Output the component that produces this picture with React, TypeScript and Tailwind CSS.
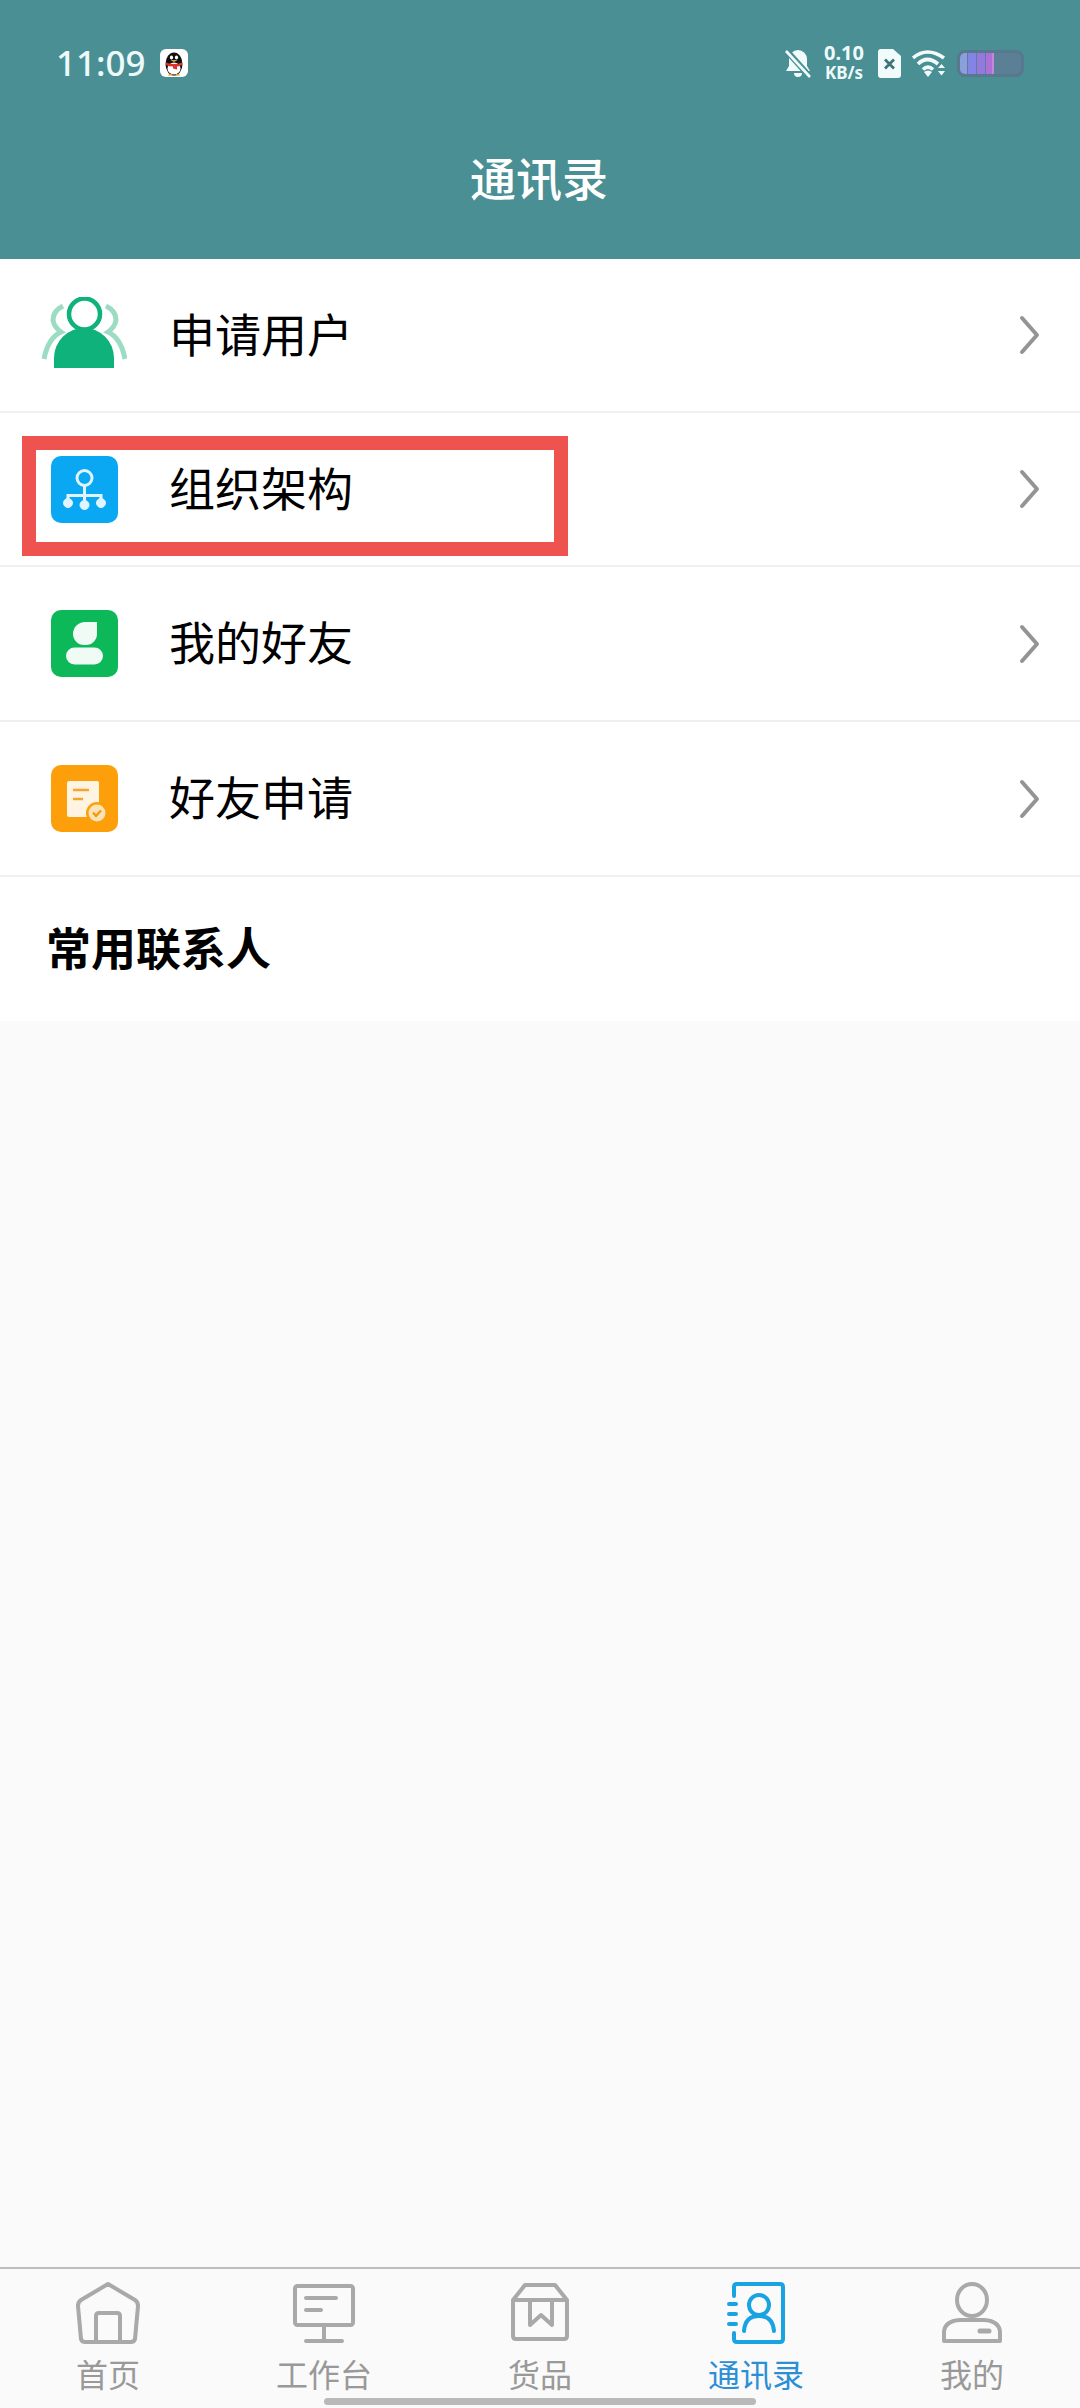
import type { ReactNode } from 'react';

const font = { fontFamily: '"Noto Sans CJK SC", "Noto Sans", sans-serif' };

function PenguinBadge() {
  return (
    <div className="w-7 h-7 rounded-md bg-white flex items-center justify-center">
      <svg viewBox="0 0 28 28" className="w-7 h-7">
        <ellipse cx="14" cy="15" rx="8.5" ry="11.5" fill="#111" />
        <ellipse cx="14" cy="19.5" rx="6.5" ry="6" fill="#fff" />
        <ellipse cx="11.5" cy="8.5" rx="1.6" ry="2" fill="#fff" />
        <ellipse cx="16.5" cy="8.5" rx="1.6" ry="2" fill="#fff" />
        <path d="M10.5 11 h7 l-3.5 2 z" fill="#f0a020" />
        <path d="M6 13.5 q8 3 16 0 l0 2.5 q-3 1.5 -5 1.5 l0 3 l-4 -1 l0 -2 q-4 0 -7 -1.5 z" fill="#d8342c" />
        <path d="M8 26.5 h5 l-1 -1.5 h-3 z M15 26.5 h5 l-1 -1.5 h-3 z" fill="#e8a020" />
      </svg>
    </div>
  );
}

function StatusIcons() {
  return (
    <div className="flex items-center">
      <svg viewBox="0 0 26 29" className="w-[26px] h-[29px]">
        <path d="M13 1 a9 9 0 0 1 9 9 v7 l3 5 H1 l3 -5 V10 a9 9 0 0 1 9 -9 z M9 24 h8 a4 4 0 0 1 -8 0 z" fill="#f2fbfb" />
        <path d="M1 1 L25 28" stroke="#498f94" strokeWidth="6" />
        <path d="M1 2 L25 28" stroke="#f2fbfb" strokeWidth="2.6" />
      </svg>
      <div className="ml-[12px] w-[42px] flex flex-col items-center font-bold text-[#eefafa]" style={{ fontFamily: '"Noto Sans", sans-serif' }}>
        <span className="text-[20px] h-[20px] leading-[20px]">0.10</span>
        <span className="text-[17px] h-[20px] leading-[20px] whitespace-nowrap">KB/s</span>
      </div>
      <svg viewBox="0 0 23 29" className="ml-[13px] w-[23px] h-[29px]">
        <path d="M3 0 H15 L23 7 V26 a3 3 0 0 1 -3 3 H3 a3 3 0 0 1 -3 -3 V3 a3 3 0 0 1 3 -3 z" fill="#f2fbfb" />
        <path d="M7 10.5 L16 19.5 M16 10.5 L7 19.5" stroke="#3d7478" strokeWidth="2.8" />
      </svg>
      <svg viewBox="0 0 34 28" className="ml-[11px] w-[34px] h-[28px]" fill="none" stroke="#f2fbfb" strokeWidth="3.6">
        <path d="M1 9 Q15 -3 32 9" />
        <path d="M6 15 Q15 6 26 15" />
        <path d="M11 20.5 Q16 15.5 21 20.5" />
        <path d="M12 23 L16 28 L20 23 Q16 20 12 23 z" fill="#f2fbfb" stroke="none" />
        <path d="M26 19 L29.5 15 L33 19 z M26 22 L29.5 26.5 L33 22 z" fill="#f2fbfb" stroke="none" />
      </svg>
      <div className="ml-[11px] w-[67px] h-[27px] rounded-[8px] border-[3px] border-[#58788f] bg-[#5b7f95] overflow-hidden flex">
        <div className="w-[7px] bg-[#8b9fdc]" />
        <div className="w-[8px] ml-[1px] bg-[#8484e6]" />
        <div className="w-[8px] ml-[1px] bg-[#9478e0]" />
        <div className="w-[6px] ml-[1px] bg-[#ae6fd6]" />
        <div className="w-[2px] bg-[#c08ad8]" />
      </div>
    </div>
  );
}

function ApplyUserIcon() {
  return (
    <svg viewBox="0 0 86 76" className="w-[86px] h-[76px]">
      <path d="M22 9 Q12 14 12 23 Q13 30 20 35 Q7 41 3 62" fill="none" stroke="#9bdcc3" strokeWidth="5" />
      <path d="M65 9 Q75 14 75 23 Q74 30 67 35 Q80 41 84 62" fill="none" stroke="#9bdcc3" strokeWidth="5" />
      <path d="M13 71 V61 a30 30 0 0 1 60 0 V71 z" fill="#0fb27a" />
      <circle cx="43.5" cy="17" r="15.5" fill="#fff" stroke="#0fb27a" strokeWidth="4.5" />
    </svg>
  );
}

function OrgIcon() {
  return (
    <div className="w-[67px] h-[67px] rounded-[10px] bg-[#0aa7f2] flex items-center justify-center">
      <svg viewBox="0 0 67 67" className="w-[67px] h-[67px]" fill="#dff4ff" stroke="#dff4ff">
        <circle cx="33.5" cy="22" r="7.5" fill="none" strokeWidth="3" />
        <path d="M33.5 29.5 V47 M17 47 V39.5 H50 V47" fill="none" strokeWidth="3" />
        <circle cx="17" cy="47" r="4.5" />
        <circle cx="33.5" cy="49" r="4.5" />
        <circle cx="50" cy="47" r="4.5" />
      </svg>
    </div>
  );
}

function FriendIcon() {
  return (
    <div className="w-[67px] h-[67px] rounded-[10px] bg-[#0cb858] flex items-center justify-center">
      <svg viewBox="0 0 67 67" className="w-[67px] h-[67px]" fill="#f1fbf5">
        <path d="M46 12 V24 a11 11 0 0 1 -11 11 H33 a11 11 0 0 1 -11 -11 V24 a12 12 0 0 1 12 -12 z" />
        <rect x="15" y="37.5" width="37" height="17" rx="8.5" />
      </svg>
    </div>
  );
}

function RequestIcon() {
  return (
    <div className="w-[67px] h-[67px] rounded-[10px] bg-[#fd9f0a] flex items-center justify-center">
      <svg viewBox="0 0 67 67" className="w-[67px] h-[67px]">
        <rect x="16" y="16" width="32" height="36" rx="2" fill="#fff4e2" />
        <path d="M22 25 H38 M22 34 H32" stroke="#f5a52d" strokeWidth="2.4" />
        <circle cx="46" cy="48" r="11" fill="#fd9f0a" />
        <circle cx="46" cy="48" r="8.5" fill="#fbe3b8" />
        <path d="M42 47.5 L45 51 L50 45.5" fill="none" stroke="#f39a10" strokeWidth="2.4" />
      </svg>
    </div>
  );
}

const rows = [
  { label: '申请用户', icon: <ApplyUserIcon />, h: 'h-[154px]' },
  { label: '组织架构', icon: <OrgIcon />, h: 'h-[154px]' },
  { label: '我的好友', icon: <FriendIcon />, h: 'h-[155px]' },
  { label: '好友申请', icon: <RequestIcon />, h: 'h-[155px]' },
];

function Row({ label, icon, h }: { label: string; icon: ReactNode; h: string }) {
  return (
    <div className={`${h} flex items-center border-b-2 border-[#f0f0f0]`}>
      <div className="w-[170px] flex justify-center pr-[2px] shrink-0">
        {icon}
      </div>
      <span className="-ml-[1px] text-[46px] leading-none text-black pb-[7px]">{label}</span>
      <svg viewBox="0 0 24 40" className="ml-auto mr-[39px] w-[24px] h-[40px]" fill="none" stroke="#949494" strokeWidth="4" strokeLinecap="round" strokeLinejoin="round">
        <path d="M5 3 L20 20 L5 37" />
      </svg>
    </div>
  );
}

const tabColor = '#a9a9a9';
const activeColor = '#1aa3e2';

const tabs = [
  {
    label: '首页',
    icon: (
      <svg viewBox="0 0 64 64" className="w-16 h-16" fill="none" stroke={tabColor} strokeWidth="4" strokeLinejoin="round">
        <path d="M32 3 L59 19 Q62 21 62 25 L59 58 Q58 61 55 61 H9 Q6 61 5 58 L2 25 Q2 21 5 19 z" />
        <path d="M20 61 V35 Q20 32 23 32 H41 Q44 32 44 35 V61" />
      </svg>
    ),
  },
  {
    label: '工作台',
    icon: (
      <svg viewBox="0 0 64 64" className="w-16 h-16" fill="none" stroke={tabColor} strokeWidth="4" strokeLinecap="round" strokeLinejoin="round">
        <rect x="3" y="5" width="58" height="39" rx="2.5" />
        <path d="M14 17 H44 M14 29 H29 M32 44 V60 M14 60 H50" />
      </svg>
    ),
  },
  {
    label: '货品',
    icon: (
      <svg viewBox="0 0 64 64" className="w-16 h-16" fill="none" stroke={tabColor} strokeWidth="4" strokeLinejoin="round">
        <path d="M5 19 L17 4 H47 L59 19 V55 Q59 58 56 58 H8 Q5 58 5 55 z" />
        <path d="M5 19 H59 M22 19 V44 L33 34 L44 44 V19" />
      </svg>
    ),
  },
  {
    label: '通讯录',
    icon: (
      <svg viewBox="0 0 64 64" className="w-16 h-16" fill="none" stroke={activeColor} strokeWidth="4" strokeLinecap="round" strokeLinejoin="round">
        <path d="M10 15 V6 Q10 3 13 3 H56 Q59 3 59 6 V58 Q59 61 56 61 H13 Q10 61 10 58 V52" />
        <path d="M5 23 H12 M5 33 H12 M5 43 H12" />
        <circle cx="35" cy="24" r="10" />
        <path d="M20 50 Q21 35 35 35 Q49 35 50 50" />
      </svg>
    ),
  },
  {
    label: '我的',
    icon: (
      <svg viewBox="0 0 64 64" className="w-16 h-16" fill="none" stroke={tabColor} strokeWidth="4" strokeLinecap="round">
        <ellipse cx="32" cy="19" rx="15" ry="16" />
        <path d="M4 60 V52 Q4 40 20 39 H44 Q60 40 60 52 V60 z" strokeLinejoin="round" />
        <path d="M40 50 H49" strokeWidth="5" />
      </svg>
    ),
  },
];

export default function App() {
  return (
    <div className="relative w-[1080px] h-[2408px] bg-[#fafafa] flex flex-col overflow-hidden" style={font}>
      {/* Header */}
      <div className="h-[259px] bg-[#498f94] text-white shrink-0">
        <div className="h-[126px] flex items-center justify-between pl-[56px] pr-[56px]">
          <div className="flex items-center gap-[14px]">
            <span className="text-[35px] font-medium text-[#eefafa]" style={{ fontFamily: '"Noto Sans", sans-serif' }}>11:09</span>
            <PenguinBadge />
          </div>
          <StatusIcons />
        </div>
        <div className="h-[100px] pr-[2px] flex items-center justify-center text-[46px] font-medium">通讯录</div>
      </div>

      {/* List */}
      <div className="bg-white shrink-0">
        {rows.map((r) => (
          <Row key={r.label} {...r} />
        ))}
        <div className="h-[144px] flex items-center pl-[46px] pb-[4px] text-[45px] font-bold text-black">常用联系人</div>
      </div>

      {/* Tab bar */}
      <div className="mt-auto h-[141px] border-t-2 border-[#bdbdbd] grid grid-cols-5 pt-[12px]">
        {tabs.map((t, i) => (
          <div key={t.label} className="flex flex-col items-center">
            {t.icon}
            <span className={`text-[32px] leading-[40px] mt-[8px] ${i === 3 ? 'text-[#2b8fd6]' : 'text-[#999999]'}`}>{t.label}</span>
          </div>
        ))}
      </div>

      {/* Annotation box */}
      <div className="absolute left-[22px] top-[436px] w-[546px] h-[120px] border-[14px] border-[#ef5350]" />
      {/* Home indicator */}
      <div className="absolute left-[324px] top-[2398px] w-[432px] h-[7px] rounded-full bg-[#b9b9b9]" />
    </div>
  );
}
